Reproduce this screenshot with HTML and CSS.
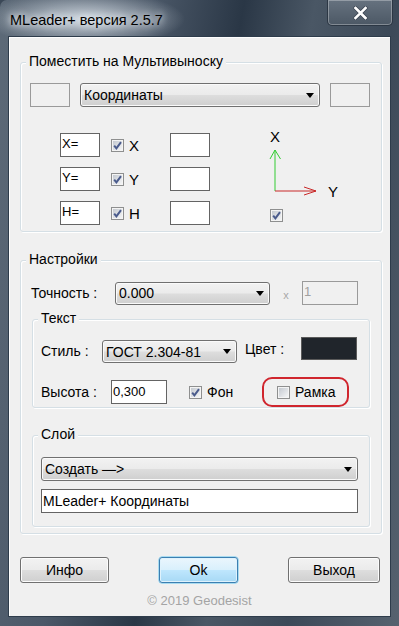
FILE: index.html
```html
<!DOCTYPE html>
<html lang="ru">
<head>
    <meta charset="UTF-8">
    <meta name="viewport" content="width=device-width, initial-scale=1.0">
    <title>MLeader+ версия 2.5.7</title>
    <link rel="stylesheet" href="styles.css">
</head>
<body>
    <div class="window">
        <!-- Заголовок окна -->
        <div class="titlebar">
            <span class="title">MLeader+ версия 2.5.7</span>
            <div class="close-btn">
                <svg width="15" height="14" viewBox="0 0 15 14">
                    <path d="M2.5 2 L12.5 12 M12.5 2 L2.5 12" stroke="#3a4350" stroke-width="4" stroke-linecap="square"/>
                    <path d="M2.5 2 L12.5 12 M12.5 2 L2.5 12" stroke="#ffffff" stroke-width="2.6" stroke-linecap="square"/>
                </svg>
            </div>
        </div>

        <div class="client">
            <!-- Поместить на Мультивыноску -->
            <div class="group group-place">
                <div class="group-title">Поместить на Мультивыноску</div>
                <div class="row-top">
                    <div class="box box-disabled box-small"></div>
                    <div class="combo combo-coords"><span>Координаты</span><i class="arrow"></i></div>
                    <div class="box box-disabled box-small"></div>
                </div>
                <div class="coords">
                    <div class="coord-rows">
                        <div class="coord-row">
                            <div class="box box-edit">X=</div>
                            <div class="check-cell">
                                <svg class="cb" width="13" height="13" viewBox="0 0 13 13">
                                    <defs><linearGradient id="cbg" x1="0" y1="0" x2="1" y2="1"><stop offset="0" stop-color="#c4c9d0"/><stop offset="1" stop-color="#f4f5f6"/></linearGradient></defs>
                                    <rect x="0.5" y="0.5" width="12" height="12" fill="#f4f4f4" stroke="#8e8f8f"/>
                                    <rect x="2" y="2" width="9" height="9" fill="url(#cbg)"/>
                                    <path d="M3.2 6.6 L5.4 9.3 L10 3.2" fill="none" stroke="#4a5b8c" stroke-width="2"/>
                                </svg>
                                <span>X</span>
                            </div>
                            <div class="box box-edit"></div>
                        </div>
                        <div class="coord-row">
                            <div class="box box-edit">Y=</div>
                            <div class="check-cell">
                                <svg class="cb" width="13" height="13" viewBox="0 0 13 13">
                                    <rect x="0.5" y="0.5" width="12" height="12" fill="#f4f4f4" stroke="#8e8f8f"/>
                                    <rect x="2" y="2" width="9" height="9" fill="url(#cbg)"/>
                                    <path d="M3.2 6.6 L5.4 9.3 L10 3.2" fill="none" stroke="#4a5b8c" stroke-width="2"/>
                                </svg>
                                <span>Y</span>
                            </div>
                            <div class="box box-edit"></div>
                        </div>
                        <div class="coord-row">
                            <div class="box box-edit">H=</div>
                            <div class="check-cell">
                                <svg class="cb" width="13" height="13" viewBox="0 0 13 13">
                                    <rect x="0.5" y="0.5" width="12" height="12" fill="#f4f4f4" stroke="#8e8f8f"/>
                                    <rect x="2" y="2" width="9" height="9" fill="url(#cbg)"/>
                                    <path d="M3.2 6.6 L5.4 9.3 L10 3.2" fill="none" stroke="#4a5b8c" stroke-width="2"/>
                                </svg>
                                <span>H</span>
                            </div>
                            <div class="box box-edit"></div>
                        </div>
                    </div>
                    <div class="axis">
                        <svg class="axis-pic" width="84" height="74" viewBox="0 0 84 74">
                            <text x="8" y="14" class="axis-label">X</text>
                            <path d="M13 63 L13 22 M8 31 L13 22 L18.5 31" fill="none" stroke="#33cc33" stroke-width="1"/>
                            <path d="M13 63 L54 63 M42 59 L54 63 L42 67" fill="none" stroke="#c82828" stroke-width="1"/>
                            <text x="66" y="69" class="axis-label">Y</text>
                        </svg>
                        <svg class="cb axis-cb" width="13" height="13" viewBox="0 0 13 13">
                            <rect x="0.5" y="0.5" width="12" height="12" fill="#f4f4f4" stroke="#8e8f8f"/>
                            <rect x="2" y="2" width="9" height="9" fill="url(#cbg)"/>
                            <path d="M3.2 6.6 L5.4 9.3 L10 3.2" fill="none" stroke="#4a5b8c" stroke-width="2"/>
                        </svg>
                    </div>
                </div>
            </div>

            <!-- Настройки -->
            <div class="group group-settings">
                <div class="group-title">Настройки</div>
                <div class="row-precision">
                    <span class="label label-precision">Точность :</span>
                    <div class="combo combo-precision"><span>0.000</span><i class="arrow"></i></div>
                    <span class="times">x</span>
                    <div class="box box-disabled box-scale">1</div>
                </div>

                <div class="group group-sub group-text">
                    <div class="group-title">Текст</div>
                    <div class="row-style">
                        <span class="label label-style">Стиль :</span>
                        <div class="combo combo-style"><span>ГОСТ 2.304-81</span><i class="arrow"></i></div>
                        <span class="label label-color">Цвет :</span>
                        <div class="swatch"></div>
                    </div>
                    <div class="row-height">
                        <span class="label label-height">Высота :</span>
                        <div class="box box-edit box-value">0,300</div>
                        <div class="check-inline check-fon">
                            <svg class="cb" width="13" height="13" viewBox="0 0 13 13">
                                <rect x="0.5" y="0.5" width="12" height="12" fill="#f4f4f4" stroke="#8e8f8f"/>
                                <rect x="2" y="2" width="9" height="9" fill="url(#cbg)"/>
                                <path d="M3.2 6.6 L5.4 9.3 L10 3.2" fill="none" stroke="#4a5b8c" stroke-width="2"/>
                            </svg>
                            <span>Фон</span>
                        </div>
                        <div class="check-inline check-frame">
                            <svg class="cb" width="13" height="13" viewBox="0 0 13 13">
                                <rect x="0.5" y="0.5" width="12" height="12" fill="#f4f4f4" stroke="#8e8f8f"/>
                                <rect x="2" y="2" width="9" height="9" fill="url(#cbg)"/>
                            </svg>
                            <span>Рамка</span>
                        </div>
                    </div>
                </div>

                <div class="group group-sub group-layer">
                    <div class="group-title">Слой</div>
                    <div class="combo combo-layer"><span>Создать —&gt;</span><i class="arrow"></i></div>
                    <div class="box box-edit box-layer">MLeader+ Координаты</div>
                </div>
            </div>

            <!-- Кнопки -->
            <div class="buttons">
                <div class="btn btn-info">Инфо</div>
                <div class="btn btn-ok">Ok</div>
                <div class="btn btn-exit">Выход</div>
            </div>
            <div class="copyright">© 2019 Geodesist</div>
        </div>
    </div>
</body>
</html>
```

FILE: styles.css
```css
body {
    margin: 0;
    font-family: "Liberation Sans", Arial, sans-serif;
    font-size: 14px;
    color: #000;
    background: #3b4857;
}
.window {
    width: 399px;
    height: 626px;
    box-sizing: border-box;
    display: flex;
    flex-direction: column;
    border-radius: 7px 7px 0 0;
    background:
        radial-gradient(ellipse 100px 28px at 85px 19px, rgba(214, 222, 230, 0.95), rgba(214, 222, 230, 0) 100%),
        linear-gradient(100deg, #5d6a78 0%, #4b5868 30%, #2a3746 48%, #4a5765 62%, #3c4958 78%, #56626f 100%);
}
.titlebar {
    height: 36px;
    display: flex;
    justify-content: space-between;
    align-items: flex-start;
}
.title {
    margin: 11px 0 0 10px;
    font-size: 14.5px;
    line-height: 18px;
    text-shadow: 0 0 6px #e6ebf0, 0 0 10px #e6ebf0;
}
.close-btn {
    width: 66px;
    height: 26px;
    box-sizing: border-box;
    margin-right: 6px;
    display: flex;
    align-items: center;
    justify-content: center;
    border: 1px solid #2c3744;
    border-top: none;
    border-radius: 0 0 5px 5px;
    background: linear-gradient(#66727f, #4c5865);
    box-shadow: inset 0 0 0 1px rgba(255, 255, 255, 0.3);
}
.client {
    margin: 0 8px 9px 8px;
    flex: 1;
    border: 1px solid #2e3c4b;
    background: #f0f0f0;
    box-shadow: inset 1px 1px 0 #fdfdfd;
    display: flex;
    flex-direction: column;
}

/* рамки групп */
.group {
    border: 1px solid #d5dfe5;
    border-radius: 3px;
    box-shadow: inset 1px 1px 0 #fff, 1px 1px 0 #fff;
}
.group-title {
    align-self: flex-start;
    margin: -10px 0 0 5px;
    padding: 0 3px;
    line-height: 16px;
    background: #f0f0f0;
}
.group-place, .group-settings {
    margin: 25px 8px 0 11px;
    display: flex;
    flex-direction: column;
}
.group-place {
    padding-bottom: 6px;
}
.group-settings {
    margin-top: 28px;
    padding-bottom: 6px;
}
.group-sub {
    margin: 14px 11px 0 11px;
    display: flex;
    flex-direction: column;
}
.group-layer {
    margin-top: 27px;
    padding-bottom: 13px;
}

/* поля */
.box {
    box-sizing: border-box;
    height: 24px;
    width: 40px;
    font-size: 13px;
    line-height: 15px;
    padding: 2px 1px;
}
.box-edit {
    background: #fff;
    border: 1px solid #646464;
}
.box-disabled {
    background: #f0f0f0;
    border: 1px solid #9a9a9a;
    color: #a0a0a0;
}
.combo {
    box-sizing: border-box;
    height: 24px;
    display: flex;
    align-items: center;
    justify-content: space-between;
    padding: 0 5px 0 3px;
    border: 1px solid #707070;
    border-radius: 3px;
    background: linear-gradient(#f2f2f2 0%, #ebebeb 48%, #dddddd 52%, #cfcfcf 100%);
    box-shadow: inset 0 0 0 1px #fafafa;
}
.arrow {
    width: 0;
    height: 0;
    border-left: 4.5px solid transparent;
    border-right: 4.5px solid transparent;
    border-top: 5px solid #000;
}
.label {
    box-sizing: border-box;
    line-height: 16px;
}

.row-top {
    display: flex;
    gap: 10px;
    margin-top: 14px;
    padding-left: 9px;
}
.combo-coords {
    width: 240px;
}

.coords {
    display: flex;
    margin-top: 26px;
    padding-left: 39px;
}
.coord-rows {
    display: flex;
    flex-direction: column;
    gap: 10px;
}
.coord-row {
    display: flex;
    align-items: center;
}
.check-cell {
    width: 70px;
    box-sizing: border-box;
    padding-left: 11px;
    display: flex;
    align-items: center;
    gap: 5px;
    font-size: 15px;
}
.cb {
    display: block;
    flex: none;
}
.axis {
    margin: -5px 0 0 52px;
    display: flex;
    flex-direction: column;
}
.axis-label {
    font-family: "Liberation Sans", Arial, sans-serif;
    font-size: 15px;
}
.axis-cb {
    margin: 7px 0 0 8px;
}

.row-precision {
    display: flex;
    align-items: center;
    margin-top: 14px;
}
.label-precision {
    width: 94px;
    padding-left: 10px;
}
.combo-precision {
    width: 155px;
    height: 23px;
}
.times {
    width: 32px;
    text-align: center;
    font-size: 11px;
    color: #a8a8a8;
    padding-top: 3px;
}
.box-scale {
    width: 56px;
}

.row-style {
    display: flex;
    align-items: flex-start;
    margin-top: 11px;
}
.label-style {
    width: 69px;
    padding-left: 8px;
    margin-top: 6px;
}
.combo-style {
    width: 135px;
    height: 23px;
    margin-top: 3px;
}
.label-color {
    width: 64px;
    padding-left: 8px;
    margin-top: 4px;
}
.swatch {
    width: 56px;
    height: 23px;
    box-sizing: border-box;
    background: #20252b;
    border: 1px solid #5a5a5a;
}

.row-height {
    display: flex;
    align-items: center;
    height: 30px;
    margin-top: 14px;
}
.label-height {
    width: 78px;
    padding-left: 8px;
}
.box-value {
    width: 56px;
    padding-top: 3px;
}
.check-inline {
    display: flex;
    align-items: center;
    gap: 5px;
}
.check-fon {
    margin-left: 22px;
}
.check-frame {
    box-sizing: border-box;
    width: 87px;
    height: 30px;
    margin: 0 20px 0 auto;
    padding-left: 13px;
    border: 2px solid #d0262e;
    border-radius: 10px;
}

.combo-layer {
    margin: 15px 11px 0 8px;
}
.box-layer {
    width: auto;
    margin: 8px 11px 0 8px;
    font-size: 14px;
    line-height: 20px;
    padding: 1px 1px;
}

/* кнопки */
.buttons {
    display: flex;
    justify-content: space-between;
    margin-top: 23px;
    padding: 0 10px 0 11px;
}
.btn {
    box-sizing: border-box;
    height: 26px;
    display: flex;
    align-items: center;
    justify-content: center;
    border: 1px solid #707070;
    border-radius: 3px;
    background: linear-gradient(#f2f2f2 0%, #ebebeb 48%, #dddddd 52%, #cfcfcf 100%);
    box-shadow: inset 0 0 0 1px #fcfcfc;
}
.btn-info {
    width: 89px;
}
.btn-ok {
    width: 79px;
    border-color: #3c7fb1;
    background: linear-gradient(#eaf6fd 0%, #d9f0fc 48%, #bee6fd 52%, #a7d9f5 100%);
    box-shadow: inset 0 0 0 1px #dff2fc, 0 0 0 0.5px #61c5f0;
}
.btn-exit {
    width: 92px;
}
.copyright {
    margin-top: 10px;
    text-align: center;
    font-size: 13px;
    line-height: 15px;
    color: #a4a4a4;
}
```
